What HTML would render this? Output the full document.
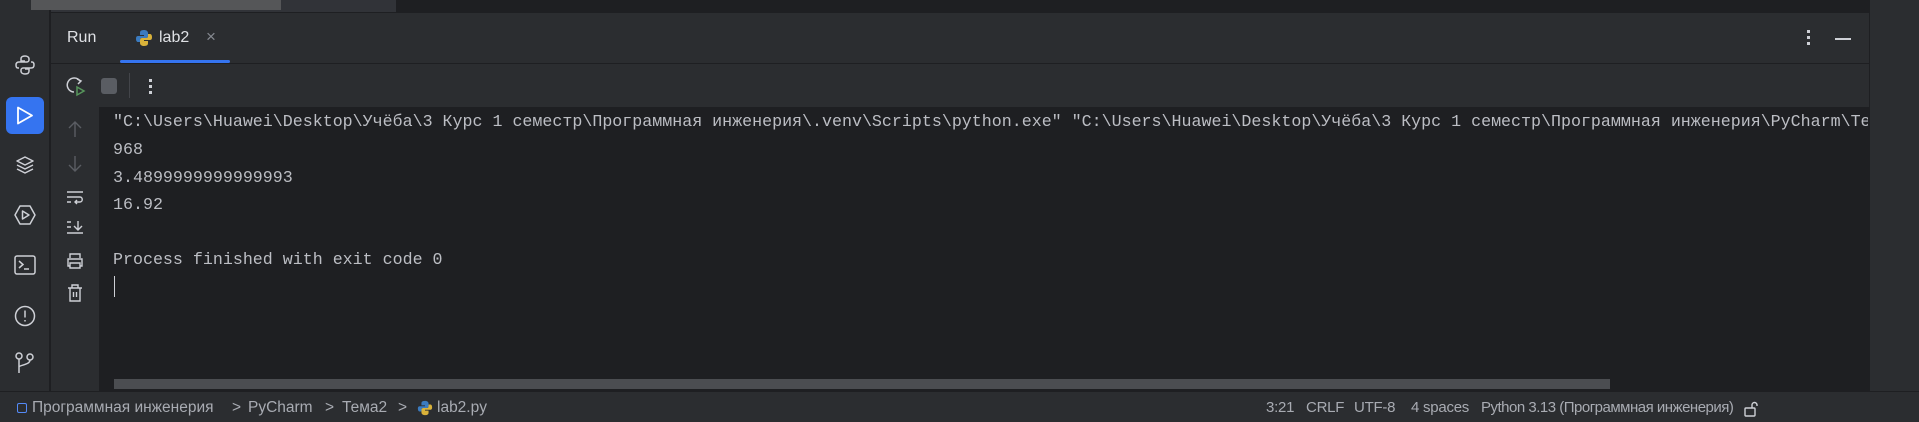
<!DOCTYPE html>
<html><head><meta charset="utf-8"><style>
*{margin:0;padding:0;box-sizing:border-box}
body{width:1919px;height:422px;overflow:hidden;background:#1e1f22;position:relative;font-family:"Liberation Sans",sans-serif;color:#dfe1e5}
.a{position:absolute}
.mono{font-family:"Liberation Mono",monospace;font-size:16.65px;color:#bcbec4;white-space:pre;line-height:20px}
.st{font-size:15.5px;color:#a8abb2;top:399px;line-height:18px;white-space:pre}
.r{font-size:15px;letter-spacing:-0.25px}
svg{position:absolute;overflow:visible}
</style></head><body>
<div class="a" style="left:0;top:0;width:50px;height:392px;background:#2b2d30;border-right:1px solid #1e1f22"></div>
<div class="a" style="left:51px;top:0;width:345px;height:12px;background:#313338"></div>
<div class="a" style="left:31px;top:0;width:250px;height:10px;background:#555658"></div>
<div class="a" style="left:396px;top:0;width:1px;height:12px;background:#1e1f22"></div>
<div class="a" style="left:51px;top:12px;width:1818px;height:1px;background:#1e1f22"></div>
<div class="a" style="left:51px;top:13px;width:1818px;height:50px;background:#2b2d30"></div>
<div class="a" style="left:67px;top:29px;font-size:16px;color:#dfe1e5">Run</div>
<svg style="left:135px;top:29px" width="18" height="18" viewBox="0 0 18 18"><path d="M9 1C5 1 5 3 5 4V6H9V7H3C1 7 1 9 1 10C1 12 2 13 3 13H5V11C5 9.5 6 9 7 9H11C12 9 13 8 13 7V4C13 2 11 1 9 1Z" fill="#3b7bbf"/><path d="M9 17C13 17 13 15 13 14V12H9V11H15C17 11 17 9 17 8C17 6 16 5 15 5H13V7C13 8.5 12 9 11 9H7C6 9 5 10 5 11V14C5 16 7 17 9 17Z" fill="#d9b23a"/></svg>
<div class="a" style="left:159px;top:29px;font-size:16px;color:#dfe1e5">lab2</div>
<div class="a" style="left:206px;top:27px;font-size:17px;color:#868a91">×</div>
<div class="a" style="left:120px;top:60px;width:110px;height:3px;background:#3574f0;border-radius:2px"></div>
<div class="a" style="left:1807px;top:30px;width:3px;height:3px;background:#ced0d6;box-shadow:0 6px #ced0d6,0 12px #ced0d6"></div>
<div class="a" style="left:1835px;top:38px;width:16px;height:1.5px;background:#ced0d6"></div>
<div class="a" style="left:51px;top:63px;width:1818px;height:1px;background:#1e1f22"></div>
<div class="a" style="left:51px;top:64px;width:1818px;height:43px;background:#2b2d30"></div>
<svg style="left:67px;top:77px" width="20" height="20" viewBox="0 0 20 20"><path d="M13 4A7 7 0 1 0 7 15" stroke="#ced0d6" stroke-width="1.5" fill="none"/><path d="M10 2L14 4L11 7" stroke="#ced0d6" stroke-width="1.5" fill="none"/><path d="M10 10L17 14L10 18Z" stroke="#57965c" stroke-width="1.5" fill="none"/></svg>
<div class="a" style="left:101px;top:78px;width:16px;height:16px;background:#5a5d63;border-radius:3px"></div>
<div class="a" style="left:129px;top:73px;width:1px;height:25px;background:#43454a"></div>
<div class="a" style="left:149px;top:79px;width:3px;height:3px;background:#ced0d6;box-shadow:0 6px #ced0d6,0 12px #ced0d6"></div>
<div class="a" style="left:51px;top:107px;width:48px;height:285px;background:#2b2d30"></div>
<div class="a" style="left:1869px;top:0;width:50px;height:392px;background:#2b2d30;border-left:1px solid #1e1f22"></div>
<svg style="left:15px;top:55px" width="20" height="20" viewBox="0 0 20 20" fill="none" stroke="#ced0d6" stroke-width="1.5"><path d="M10 1C6 1 6 3 6 4V6H10M4 13H3C1 13 1 11 1 10C1 8 2 7 4 7H12C13 7 14 6 14 5V4C14 2 12 1 10 1"/><path d="M10 19C14 19 14 17 14 16V14H10M16 7H17C19 7 19 9 19 10C19 12 18 13 16 13H8C7 13 6 14 6 15V16C6 18 8 19 10 19"/></svg>
<div class="a" style="left:6px;top:97px;width:38px;height:37px;background:#3574f0;border-radius:6px"></div>
<svg style="left:16px;top:106px" width="18" height="19" viewBox="0 0 18 19"><path d="M2 1.5L16 9.5L2 17.5Z" stroke="#fff" stroke-width="1.8" fill="none" stroke-linejoin="round"/></svg>
<svg style="left:15px;top:155px" width="20" height="20" viewBox="0 0 20 20" fill="none" stroke="#ced0d6" stroke-width="1.5" stroke-linejoin="round"><path d="M10 2L18 6L10 10L2 6Z"/><path d="M2 10L10 14L18 10"/><path d="M2 14L10 18L18 14"/></svg>
<svg style="left:14px;top:205px" width="22" height="20" viewBox="0 0 22 20" fill="none" stroke="#ced0d6" stroke-width="1.5" stroke-linejoin="round"><path d="M6 1H16L21 10L16 19H6L1 10Z"/><path d="M8.5 6L15 10L8.5 14Z"/></svg>
<svg style="left:14px;top:255px" width="22" height="20" viewBox="0 0 22 20" fill="none" stroke="#ced0d6" stroke-width="1.5"><rect x="1" y="1" width="20" height="18" rx="2"/><path d="M5 6L9 9.5L5 13M10 14H15"/></svg>
<svg style="left:14px;top:305px" width="22" height="22" viewBox="0 0 22 22" fill="none" stroke="#ced0d6" stroke-width="1.5"><circle cx="11" cy="11" r="9.5"/><path d="M11 5.5V12.5M11 15V16.5"/></svg>
<svg style="left:15px;top:352px" width="20" height="22" viewBox="0 0 20 22" fill="none" stroke="#ced0d6" stroke-width="1.5"><circle cx="4" cy="4" r="3"/><circle cx="15" cy="5" r="3"/><path d="M4 7V21M15 8C15 13 4 13 4 15"/></svg>
<svg style="left:67px;top:120px" width="16" height="18" viewBox="0 0 16 18" fill="none" stroke="#5a5d63" stroke-width="1.4"><path d="M8 17V2M2 8L8 2L14 8"/></svg>
<svg style="left:67px;top:155px" width="16" height="18" viewBox="0 0 16 18" fill="none" stroke="#5a5d63" stroke-width="1.4"><path d="M8 1V16M2 10L8 16L14 10"/></svg>
<svg style="left:66px;top:190px" width="18" height="16" viewBox="0 0 18 16" fill="none" stroke="#ced0d6" stroke-width="1.4"><path d="M1 2H17M1 7H14C17 7 17 12 14 12H9M11 10L9 12L11 14M1 12H5"/></svg>
<svg style="left:66px;top:219px" width="18" height="16" viewBox="0 0 18 16" fill="none" stroke="#ced0d6" stroke-width="1.4"><path d="M1 3H5M1 8H5M1 14H17M12 2V11M8 7L12 11L16 7"/></svg>
<svg style="left:66px;top:253px" width="18" height="16" viewBox="0 0 18 16" fill="none" stroke="#ced0d6" stroke-width="1.4"><path d="M4 5V1H14V5M4 13H2V6H16V13H14M4 10H14V15H4Z"/></svg>
<svg style="left:67px;top:284px" width="16" height="18" viewBox="0 0 16 18" fill="none" stroke="#ced0d6" stroke-width="1.4"><path d="M1 4H15M5 4V1H11V4M3 4V17H13V4M6.5 8V13M9.5 8V13"/></svg>
<div class="a mono" style="left:113px;top:112px;width:1755px;overflow:hidden">"C:\Users\Huawei\Desktop\Учёба\3 Курс 1 семестр\Программная инженерия\.venv\Scripts\python.exe" "C:\Users\Huawei\Desktop\Учёба\3 Курс 1 семестр\Программная инженерия\PyCharm\Те</div>
<div class="a mono" style="left:113px;top:140px">968</div>
<div class="a mono" style="left:113px;top:168px">3.4899999999999993</div>
<div class="a mono" style="left:113px;top:195px">16.92</div>
<div class="a mono" style="left:113px;top:250px">Process finished with exit code 0</div>
<div class="a" style="left:114px;top:276px;width:1px;height:21px;background:#ced0d6"></div>
<div class="a" style="left:114px;top:379px;width:1496px;height:10px;background:#4b4d51"></div>
<div class="a" style="left:0;top:391px;width:1919px;height:31px;background:#2b2d30;border-top:1px solid #1e1f22"></div>
<div class="a" style="left:17px;top:403px;width:10px;height:10px;border:1.5px solid #548af7;border-radius:2px"></div>
<div class="a st" style="left:32px">Программная инженерия</div>
<div class="a st" style="left:232px">&gt;</div>
<div class="a st" style="left:248px">PyCharm</div>
<div class="a st" style="left:325px">&gt;</div>
<div class="a st" style="left:342px">Тема2</div>
<div class="a st" style="left:398px">&gt;</div>
<svg style="left:417px;top:400px" width="16" height="16" viewBox="0 0 18 18"><path d="M9 1C5 1 5 3 5 4V6H9V7H3C1 7 1 9 1 10C1 12 2 13 3 13H5V11C5 9.5 6 9 7 9H11C12 9 13 8 13 7V4C13 2 11 1 9 1Z" fill="#3b7bbf"/><path d="M9 17C13 17 13 15 13 14V12H9V11H15C17 11 17 9 17 8C17 6 16 5 15 5H13V7C13 8.5 12 9 11 9H7C6 9 5 10 5 11V14C5 16 7 17 9 17Z" fill="#d9b23a"/></svg>
<div class="a st" style="left:437px">lab2.py</div>
<div class="a st r" style="left:1266px">3:21</div>
<div class="a st r" style="left:1306px">CRLF</div>
<div class="a st r" style="left:1354px">UTF-8</div>
<div class="a st r" style="left:1411px">4 spaces</div>
<div class="a st r" style="left:1481px;letter-spacing:-0.5px">Python 3.13 (Программная инженерия)</div>
<svg style="left:1744px;top:401px" width="14" height="16" viewBox="0 0 14 16" fill="none" stroke="#ced0d6" stroke-width="1.4"><rect x="1" y="7" width="10" height="8" rx="1"/><path d="M8 7V4A2.5 2.5 0 0 1 13 4V5"/></svg>
</body></html>
